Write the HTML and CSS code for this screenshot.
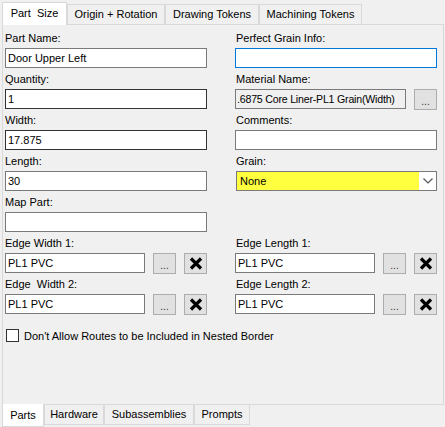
FILE: index.html
```html
<!DOCTYPE html>
<html lang="en">
<head>
    <meta charset="UTF-8">
    <title>Part Properties</title>
    <link rel="stylesheet" href="styles.css">
</head>
<body>
    <div class="window">
        <div class="tabs top">
            <div class="tab active w1">Part&nbsp; Size</div>
            <div class="tab w2">Origin + Rotation</div>
            <div class="tab w3">Drawing Tokens</div>
            <div class="tab w4">Machining Tokens</div>
        </div>

        <div class="panel">
            <div class="grid">
                <div class="field">
                    <label>Part Name:</label>
                    <div class="box">Door Upper Left</div>
                </div>
                <div class="field">
                    <label>Perfect Grain Info:</label>
                    <div class="box focus"></div>
                </div>

                <div class="field">
                    <label>Quantity:</label>
                    <div class="box dark">1</div>
                </div>
                <div class="field">
                    <label>Material Name:</label>
                    <div class="row">
                        <div class="box readonly">.6875 Core Liner-PL1 Grain(Width)</div>
                        <div class="btn dots">...</div>
                    </div>
                </div>

                <div class="field">
                    <label>Width:</label>
                    <div class="box dark">17.875</div>
                </div>
                <div class="field">
                    <label>Comments:</label>
                    <div class="box"></div>
                </div>

                <div class="field">
                    <label>Length:</label>
                    <div class="box">30</div>
                </div>
                <div class="field">
                    <label>Grain:</label>
                    <div class="combo">
                        <span class="combo-text">None</span>
                        <span class="combo-arrow">
                            <svg width="10" height="6" viewBox="0 0 10 6"><path d="M0.5 0.5 L5 5 L9.5 0.5" fill="none" stroke="#555" stroke-width="1.2"/></svg>
                        </span>
                    </div>
                </div>

                <div class="field">
                    <label>Map Part:</label>
                    <div class="box"></div>
                </div>
                <div class="field"></div>

                <div class="field">
                    <label>Edge Width 1:</label>
                    <div class="row">
                        <div class="box">PL1 PVC</div>
                        <div class="btn dots">...</div>
                        <div class="btn clear"><svg width="14" height="13" viewBox="0 0 14 13"><path d="M2 1.5 L12 11.5 M12 1.5 L2 11.5" stroke="#000" stroke-width="3.2"/></svg></div>
                    </div>
                </div>
                <div class="field">
                    <label>Edge Length 1:</label>
                    <div class="row">
                        <div class="box">PL1 PVC</div>
                        <div class="btn dots">...</div>
                        <div class="btn clear"><svg width="14" height="13" viewBox="0 0 14 13"><path d="M2 1.5 L12 11.5 M12 1.5 L2 11.5" stroke="#000" stroke-width="3.2"/></svg></div>
                    </div>
                </div>

                <div class="field">
                    <label>Edge&nbsp; Width 2:</label>
                    <div class="row">
                        <div class="box">PL1 PVC</div>
                        <div class="btn dots">...</div>
                        <div class="btn clear"><svg width="14" height="13" viewBox="0 0 14 13"><path d="M2 1.5 L12 11.5 M12 1.5 L2 11.5" stroke="#000" stroke-width="3.2"/></svg></div>
                    </div>
                </div>
                <div class="field">
                    <label>Edge Length 2:</label>
                    <div class="row">
                        <div class="box">PL1 PVC</div>
                        <div class="btn dots">...</div>
                        <div class="btn clear"><svg width="14" height="13" viewBox="0 0 14 13"><path d="M2 1.5 L12 11.5 M12 1.5 L2 11.5" stroke="#000" stroke-width="3.2"/></svg></div>
                    </div>
                </div>
            </div>

            <div class="check">
                <span class="checkbox"></span>
                <span>Don't Allow Routes to be Included in Nested Border</span>
            </div>
        </div>

        <div class="tabs bottom">
            <div class="tab active b1">Parts</div>
            <div class="tab b2">Hardware</div>
            <div class="tab b3">Subassemblies</div>
            <div class="tab b4">Prompts</div>
        </div>
    </div>
</body>
</html>
```

FILE: styles.css
```css
body{
    margin: 0;
    background: #f0f0f0;
    font-family: "Liberation Sans", Arial, sans-serif;
    font-size: 11px;
    color: #000;
}
.window{
    width: 445px;
    height: 427px;
    display: flex;
    flex-direction: column;
    overflow: hidden;
}

/* tab strips */
.tabs{
    display: flex;
    padding-left: 2px;
}
.tabs.top{
    height: 24px;
    align-items: flex-end;
}
.tabs.bottom{
    height: 22px;
    align-items: flex-start;
}
.tab{
    box-sizing: border-box;
    height: 20px;
    line-height: 18px;
    text-align: center;
    border: 1px solid #d9d9d9;
    background: #f0f0f0;
    white-space: nowrap;
}
.tabs.top .tab{
    border-bottom: none;
}
.tabs.bottom .tab{
    border-top: none;
}
.tab.active{
    background: #fff;
    position: relative;
    z-index: 1;
}
.tabs.top .tab.active{
    height: 23px;
    line-height: 21px;
    margin-bottom: -1px;
}
.tabs.bottom .tab.active{
    height: 23px;
    line-height: 22px;
    margin-top: -1px;
}
.w1{ width: 65px; }
.w2{ width: 98px; }
.w3{ width: 94px; }
.w4{ width: 103px; }
.b1{ width: 42px; }
.b2{ width: 60px; }
.b3{ width: 90px; }
.b4{ width: 56px; }

/* main panel */
.panel{
    flex: 1;
    margin: 0 1px 0 2px;
    border: 1px solid #d9d9d9;
    padding: 2px 6px 0 2px;
}
.grid{
    display: grid;
    grid-template-columns: 202px 202px;
    column-gap: 28px;
}
.field{
    display: flex;
    flex-direction: column;
    height: 41px;
}
.field label{
    display: block;
    line-height: 14px;
    padding-top: 4px;
    margin-bottom: 3px;
    white-space: nowrap;
}
.grid .field:nth-child(even) label{
    padding-left: 1px;
}
.box{
    box-sizing: border-box;
    height: 20px;
    line-height: 18px;
    padding-left: 2px;
    border: 1px solid #7a7a7a;
    background: #fff;
    white-space: nowrap;
    overflow: hidden;
}
.box.dark{
    border-color: #333;
}
.box.focus{
    border-color: #0078d7;
}
.box.readonly{
    background: #f0f0f0;
    font-size: 10.6px;
    letter-spacing: -0.2px;
    padding-left: 1px;
}
.row{
    display: flex;
    gap: 8px;
}
.row .box{
    flex: 1;
}
.btn{
    box-sizing: border-box;
    width: 23px;
    height: 21px;
    flex: none;
    border: 1px solid #adadad;
    background: #e1e1e1;
    display: flex;
    align-items: center;
    justify-content: center;
}
.btn.dots{
    font-size: 10px;
    line-height: 10px;
    color: #333;
    padding-top: 5px;
}

/* combo */
.combo{
    box-sizing: border-box;
    height: 20px;
    margin-left: 1px;
    border: 1px solid #7a7a7a;
    display: flex;
}
.combo-text{
    flex: 1;
    background: #ffff40;
    line-height: 18px;
    padding-left: 3px;
}
.combo-arrow{
    width: 17px;
    background: #fff;
    display: flex;
    align-items: center;
    justify-content: center;
}

/* checkbox */
.check{
    display: flex;
    align-items: center;
    gap: 5px;
    margin-top: 15px;
    padding-left: 1px;
}
.checkbox{
    box-sizing: border-box;
    width: 13px;
    height: 13px;
    border: 1px solid #333;
    background: #fff;
}
```
